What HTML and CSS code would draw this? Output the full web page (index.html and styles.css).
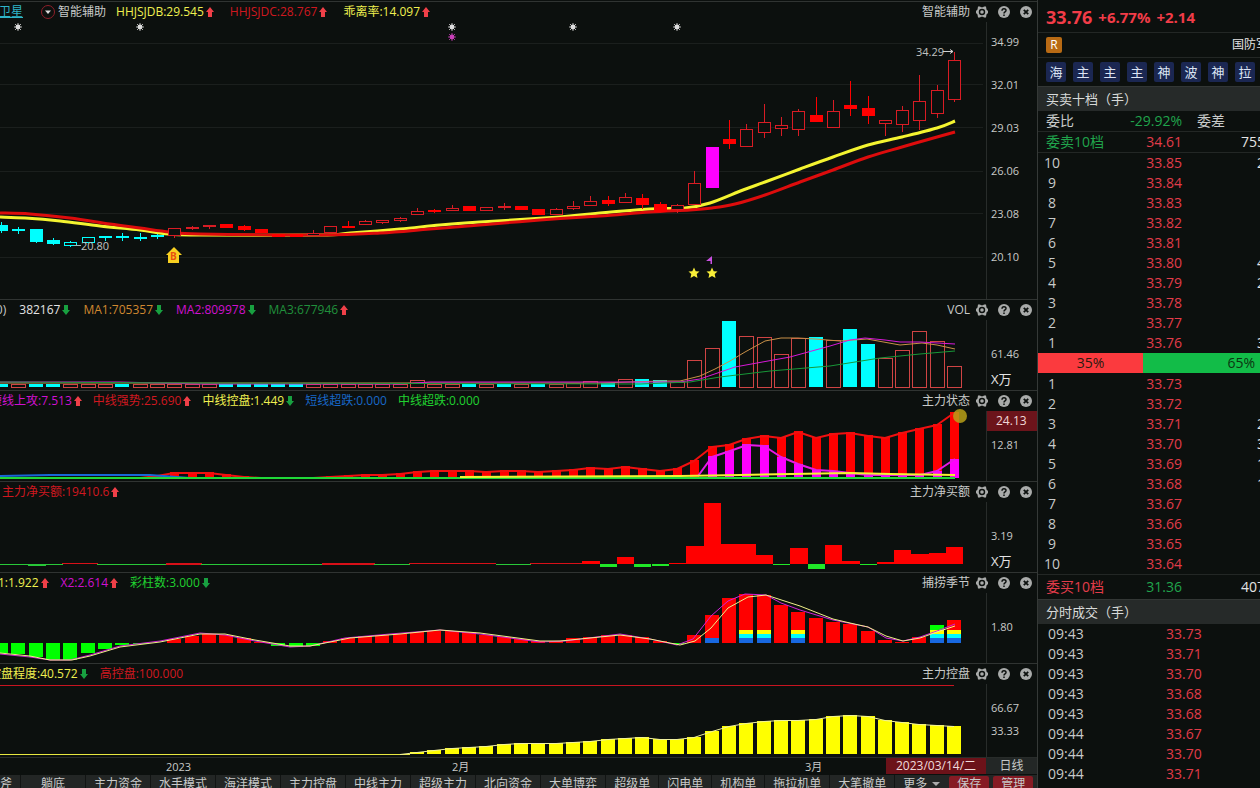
FILE: index.html
```html
<!DOCTYPE html>
<html lang="zh-CN">
<head>
<meta charset="utf-8">
<title>智能辅助</title>
<link rel="stylesheet" href="styles.css">
</head>
<body>
<svg class="defs" aria-hidden="true">
  <symbol id="up" viewBox="0 0 8 10"><path d="M4 0L8 5H6V10H2V5H0Z" fill="#f04048"/></symbol>
  <symbol id="down" viewBox="0 0 8 10"><path d="M4 10L8 5H6V0H2V5H0Z" fill="#18a040"/></symbol>
  <symbol id="gear" viewBox="0 0 12 12"><path fill-rule="evenodd" fill="#a9abaa" d="M2 .5H4L5 1.300H7L8 .5H10L10.500 3.500L12 5V7L10.500 8.500L10 11.500H8L7 10.700H5L4 11.500H2L1.500 8.500L0 7V5L1.500 3.500ZM6 2.800A3.200 3.200 0 1 0 6 9.200A3.200 3.200 0 1 0 6 2.800ZM6 4.200A1.800 1.800 0 1 1 6 7.800A1.800 1.800 0 1 1 6 4.200Z"/></symbol>
  <symbol id="help" viewBox="0 0 12 12"><circle cx="6" cy="6" r="6" fill="#a9abaa"/><path d="M4 4.800C4 2 8 2 8 4.500C8 6 6 5.900 6 7.500M6 8.600V10" fill="none" stroke="#0c100e" stroke-width="1.500"/></symbol>
  <symbol id="close" viewBox="0 0 12 12"><circle cx="6" cy="6" r="6" fill="#a9abaa"/><path d="M3.800 3.800L8.200 8.200M8.200 3.800L3.800 8.200" stroke="#0c100e" stroke-width="1.800"/></symbol>
</svg>
<div class="app">
  <main class="charts">
    <section class="panel panel-main">
      <header class="head">
        <div class="legend">
          <a class="stock" href="#">卫星</a>
          <button class="fold" aria-label="展开"><svg viewBox="0 0 14 14"><circle cx="7" cy="7" r="6.500" fill="none" stroke="#8e1f2a"/><path d="M4 5.500H10L7 9Z" fill="#ddd"/></svg></button>
          <span class="name">智能辅助</span>
          <span class="item yellow">HHJSJDB:29.545<svg><use href="#up"/></svg></span>
          <span class="item red">HHJSJDC:28.767<svg><use href="#up"/></svg></span>
          <span class="item yellow">乖离率:14.097<svg><use href="#up"/></svg></span>
        </div>
        <div class="tools">智能辅助<button aria-label="设置"><svg><use href="#gear"/></svg></button><button aria-label="帮助"><svg><use href="#help"/></svg></button><button aria-label="关闭"><svg><use href="#close"/></svg></button></div>
      </header>
      <div class="body">
        <svg class="plot" id="kline" viewBox="0 22 986 277"></svg>
        <div class="axis axis-price"><span>34.99</span><span>32.01</span><span>29.03</span><span>26.06</span><span>23.08</span><span>20.10</span></div>
      </div>
    </section>
    <section class="panel">
      <header class="head">
        <div class="legend cut-vol">
          <span class="name">10)</span>
          <span class="item white">382167<svg><use href="#down"/></svg></span>
          <span class="item orange">MA1:705357<svg><use href="#down"/></svg></span>
          <span class="item magenta">MA2:809978<svg><use href="#down"/></svg></span>
          <span class="item green">MA3:677946<svg><use href="#up"/></svg></span>
        </div>
        <div class="tools">VOL<button aria-label="设置"><svg><use href="#gear"/></svg></button><button aria-label="帮助"><svg><use href="#help"/></svg></button><button aria-label="关闭"><svg><use href="#close"/></svg></button></div>
      </header>
      <div class="body">
        <svg class="plot" id="vol" viewBox="0 320 986 70"></svg>
        <div class="axis axis-mid"><span>61.46</span><span class="unit">X万</span></div>
      </div>
    </section>
    <section class="panel">
      <header class="head">
        <div class="legend cut-state">
          <span class="item magenta">短线上攻:7.513<svg><use href="#up"/></svg></span>
          <span class="item red">中线强势:25.690<svg><use href="#up"/></svg></span>
          <span class="item yellow">中线控盘:1.449<svg><use href="#down"/></svg></span>
          <span class="item blue">短线超跌:0.000</span>
          <span class="item lime">中线超跌:0.000</span>
        </div>
        <div class="tools">主力状态<button aria-label="设置"><svg><use href="#gear"/></svg></button><button aria-label="帮助"><svg><use href="#help"/></svg></button><button aria-label="关闭"><svg><use href="#close"/></svg></button></div>
      </header>
      <div class="body">
        <svg class="plot" id="state" viewBox="0 411 986 70"></svg>
        <div class="axis axis-state"><span class="mark">24.13</span><span>12.81</span></div>
      </div>
    </section>
    <section class="panel">
      <header class="head">
        <div class="legend cut-net">
          <span class="item red">主力净买额:19410.6<svg><use href="#up"/></svg></span>
        </div>
        <div class="tools">主力净买额<button aria-label="设置"><svg><use href="#gear"/></svg></button><button aria-label="帮助"><svg><use href="#help"/></svg></button><button aria-label="关闭"><svg><use href="#close"/></svg></button></div>
      </header>
      <div class="body">
        <svg class="plot" id="net" viewBox="0 502 986 70"></svg>
        <div class="axis axis-mid"><span>3.19</span><span class="unit">X万</span></div>
      </div>
    </section>
    <section class="panel">
      <header class="head">
        <div class="legend cut-season">
          <span class="item yellow">X1:1.922<svg><use href="#up"/></svg></span>
          <span class="item magenta">X2:2.614<svg><use href="#up"/></svg></span>
          <span class="item lime">彩柱数:3.000<svg><use href="#down"/></svg></span>
        </div>
        <div class="tools">捕捞季节<button aria-label="设置"><svg><use href="#gear"/></svg></button><button aria-label="帮助"><svg><use href="#help"/></svg></button><button aria-label="关闭"><svg><use href="#close"/></svg></button></div>
      </header>
      <div class="body">
        <svg class="plot" id="season" viewBox="0 593 986 70"></svg>
        <div class="axis axis-mid"><span>1.80</span></div>
      </div>
    </section>
    <section class="panel panel-last">
      <header class="head">
        <div class="legend cut-control">
          <span class="item yellow">控盘程度:40.572<svg><use href="#down"/></svg></span>
          <span class="item red">高控盘:100.000</span>
        </div>
        <div class="tools">主力控盘<button aria-label="设置"><svg><use href="#gear"/></svg></button><button aria-label="帮助"><svg><use href="#help"/></svg></button><button aria-label="关闭"><svg><use href="#close"/></svg></button></div>
      </header>
      <div class="body">
        <svg class="plot" id="control" viewBox="0 684 986 73"></svg>
        <div class="axis axis-control"><span>66.67</span><span>33.33</span></div>
      </div>
    </section>
    <div class="timeline">
      <svg class="months" viewBox="0 0 886 18"><text x="166" y="13">2023</text><text x="452" y="13">2月</text><text x="805" y="13">3月</text></svg>
      <span class="date">2023/03/14/二</span>
      <button class="period">日线</button>
    </div>
    <nav class="tabs">
      <button class="first">斧</button><button class="wide">躺底</button><button>主力资金</button><button>水手模式</button><button>海洋模式</button><button>主力控盘</button><button>中线主力</button><button>超级主力</button><button>北向资金</button><button>大单博弈</button><button>超级单</button><button>闪电单</button><button>机构单</button><button>拖拉机单</button><button>大笔撤单</button><button class="more">更多<svg viewBox="0 0 8 4"><path d="M0 0H8L4 4Z" fill="#aaa"/></svg></button><button class="act">保存</button><button class="act">管理</button>
    </nav>
  </main>
  <aside class="side">
    <div class="quote"><strong>33.76</strong><b>+6.77%</b><b>+2.14</b></div>
    <div class="sector"><span class="badge">R</span><span>国防军工</span></div>
    <div class="tags"><button>海</button><button>主</button><button>主</button><button>主</button><button>神</button><button>波</button><button>神</button><button>拉</button></div>
    <h2>买卖十档（手）</h2>
    <div class="line"><span>委比</span><span class="val dn">-29.92%</span><span class="diff">委差</span></div>
    <div class="line"><span class="dn">委卖10档</span><span class="val rise">34.61</span><span class="sum">755</span></div>
    <table class="book" id="asks"></table>
    <div class="ratio"><span class="buy">35%</span><span class="sell">65%</span></div>
    <table class="book" id="bids"></table>
    <div class="line line-buy"><span class="rise">委买10档</span><span class="val dn">31.36</span><span class="sum">407</span></div>
    <h2>分时成交（手）</h2>
    <table class="deals" id="deals"></table>
  </aside>
</div>
<script src="charts.js"></script>
</body>
</html>
```
FILE: styles.css
```css
* { box-sizing: border-box; }
body {
  margin: 0;
  background: #0c100e;
  color: #c8cac9;
  font: 12px/20px "Open Sans", "Noto Sans CJK SC", sans-serif;
}
button { margin: 0; padding: 0; border: 0; background: none; color: inherit; font: inherit; }
.defs { position: absolute; width: 0; height: 0; }
.app { display: flex; height: 100vh; overflow: hidden; }
.charts { flex: 1; min-width: 0; display: flex; flex-direction: column; padding-top: 1px; overflow: hidden; }

.panel { flex: 90 1 0; display: flex; flex-direction: column; border-top: 1px solid #303432; min-height: 0; }
.panel-main { flex-grow: 297; }
.panel-last { flex-grow: 93; }
.head { flex: none; display: flex; justify-content: space-between; height: 20px; overflow: hidden; white-space: nowrap; }
.legend { display: flex; align-items: center; gap: 12px; }
.item { display: flex; align-items: center; gap: 2px; }
.item svg { width: 8px; height: 10px; }
.stock { color: #2fb4c8; }
.panel-main .legend { margin-left: -1px; gap: 16px; }
.panel-main .name { margin-right: -6px; }
.fold { display: flex; margin: 0 -13px 0 2px; }
.fold svg { width: 14px; height: 14px; }
.cut-vol { margin-left: -11px; gap: 13px; }
.cut-state { margin-left: -10px; gap: 11px; }
.cut-net { margin-left: 2px; }
.cut-season { margin-left: -9px; }
.cut-control { margin-left: -11px; }
.tools { display: flex; align-items: center; gap: 10px; padding-right: 5px; }
.tools button { display: flex; }
.tools button:first-of-type { margin-left: -4px; }
.tools svg { width: 12px; height: 12px; }

.white { color: #e4e4e4; }
.yellow { color: #f0f050; }
.red { color: #d01820; }
.orange { color: #d08830; }
.magenta { color: #d010d0; }
.green { color: #20903c; }
.blue { color: #1868c8; }
.lime { color: #20d030; }

.body { flex: 1; display: flex; min-height: 0; }
.plot { flex: 1; min-width: 0; height: 100%; display: block; }
.plot text { font-size: 11px; fill: #c0c2c1; }
.plot .mark-b { font-size: 10px; font-weight: bold; fill: #e85010; }
.axis { flex: 0 0 51px; display: flex; flex-direction: column; border-left: 1px solid #282c2a; font-size: 11px; }
.axis span { flex: none; padding-left: 4px; }
.axis-price { padding-top: 10px; gap: 23px; }
.axis-mid { padding-top: 24px; gap: 5px; }
.axis-state { gap: 4px; }
.axis-control { padding-top: 14px; gap: 3px; }
.axis .unit { font-size: 13px; color: #e4e4e4; }
.axis .mark { padding-left: 9px; background: #6c141b; color: #f0d8d8; font-size: 12px; }

.timeline { flex: none; display: flex; height: 18px; line-height: 16px; border-top: 1px solid #282c2a; }
.months { flex: 1; min-width: 0; height: 18px; }
.months text { font-size: 11px; fill: #c8cac9; }
.date { flex: 0 0 100px; height: 16px; background: #6c1219; color: #f0dcdc; text-align: center; }
.period { flex: 0 0 51px; height: 16px; background: #232726; }

.tabs { flex: 0 0 13px; display: flex; align-items: flex-start; overflow: hidden; background: #232625; line-height: 17px; white-space: nowrap; }
.tabs button { flex: none; padding: 0 8px; border-right: 1px solid #121413; }
.tabs .first { width: 21px; padding: 0; text-align: left; }
.tabs .wide { width: 65px; }
.tabs .more { display: flex; align-items: center; gap: 5px; padding-right: 7px; border: 0; }
.more svg { width: 8px; height: 4px; }
.tabs .act { width: 40px; margin: 1px 2px 0; padding: 0; border: 0; border-radius: 2px; background: #861b24; line-height: 15px; }

.side { flex: 0 0 223px; display: flex; flex-direction: column; border-left: 1px solid #353937; overflow: hidden; white-space: nowrap; font-size: 14px; }
.side > * { flex: none; }
.quote { display: flex; align-items: center; gap: 6px; height: 33px; padding: 2px 0 0 8px; border-bottom: 1px solid #232725; color: #f23c48; font-size: 15px; }
.quote strong { font-size: 18px; }
.sector { display: flex; align-items: center; justify-content: space-between; width: 244px; height: 25px; padding: 0 0 0 8px; border-bottom: 1px solid #232725; color: #e4e4e4; font-size: 12px; }
.sector span:last-child { width: 50px; }
.badge { width: 16px; border-radius: 2px; background: #b86a14; color: #fff; text-align: center; line-height: 16px; }
.tags { display: flex; align-items: center; gap: 7px; height: 28px; padding-left: 8px; }
.tags button { flex: none; width: 20px; height: 20px; border-radius: 2px; background: #1b2752; color: #dce4f4; font-size: 13px; line-height: 20px; }
.side h2 { margin: 0; height: 25px; padding-left: 8px; border-top: 1px solid #333735; background: #262a29; color: #d8dad9; font-size: 13px; font-weight: normal; line-height: 24px; }
.line { display: grid; grid-template-columns: 80px 56px 1fr; align-items: center; height: 21px; padding-left: 8px; border-bottom: 1px solid #232725; }
.val { text-align: right; }
.sum { padding-left: 59px; color: #e4e4e4; }
.diff { padding-left: 15px; }
.dn { color: #20a44c; }
.rise { color: #e23c4a; }
.line-buy { height: 25px; border: 0; border-top: 1px solid #232725; }
table { border-collapse: collapse; table-layout: fixed; }
td { height: 20px; padding: 0; line-height: 20px; }
.book { width: 300px; }
.book td:nth-child(1) { width: 28px; text-align: center; }
.book td:nth-child(2) { width: 116px; text-align: right; }
.book td:nth-child(3) { padding-left: 75px; color: #e4e4e4; }
#bids { margin-top: 1px; }
.ratio { display: flex; color: #2a1a10; }
.buy { flex: 1; background: #fb3a3e; text-align: center; }
.sell { flex: 0 0 117px; background: #12bc48; text-align: right; padding-right: 5px; color: #0c3410; }
.deals { width: 223px; }
.deals td:first-child { width: 128px; padding-left: 10px; }
```
FILE: charts.js
```js
const NS = 'http://www.w3.org/2000/svg';
const STEP = 17.33;
const RED = '#ff0000', CYAN = '#00ffff', MAG = '#ff00ff', YEL = '#ffff00', GRN = '#00ff00';
const X = i => Math.round(174.3 + STEP * (i - 10));
const $ = id => document.getElementById(id);
function add(svg, tag, attrs, text) {
  const e = document.createElementNS(NS, tag);
  for (const k in attrs) e.setAttribute(k, attrs[k]);
  if (text) e.textContent = text;
  svg.appendChild(e);
  return e;
}
const rect = (s, x, y, w, h, fill) => add(s, 'rect', { x, y, width: w, height: h, fill });
const box = (s, x, y, w, h, stroke) => add(s, 'rect', { x: x + .5, y: y + .5, width: w - 1, height: Math.max(h - 1, 1), fill: '#0c100e', stroke });
const line = (s, pts, stroke, w = 1) => add(s, 'polyline', { points: pts, fill: 'none', stroke, 'stroke-width': w, 'stroke-linejoin': 'round' });
function curve(s, p, stroke, w) {
  let d = `M${p[0][0]} ${p[0][1]}`;
  for (let i = 0; i < p.length - 1; i++) {
    const a = p[i - 1] || p[i], b = p[i], c = p[i + 1], e = p[i + 2] || c;
    d += `C${b[0] + (c[0] - a[0]) / 6} ${b[1] + (c[1] - a[1]) / 6} ${c[0] - (e[0] - b[0]) / 6} ${c[1] - (e[1] - b[1]) / 6} ${c[0]} ${c[1]}`;
  }
  add(s, 'path', { d, fill: 'none', stroke, 'stroke-width': w });
}

/* K line: kind, body top, body bottom, wick top, wick bottom */
const candles = [
  ['c',225,231,222,233],['c',229,231,227,234],['c',229,242,229,243],['c',240,244,238,245],['C',242,246,241,247],
  ['C',237,243,237,243],['c',236,238,236,241],['c',236,238,233,241],['c',237,239,233,241],['c',235,237,234,239],
  ['h',228,236,228,238],['h',227,229,226,230],['h',225,227,225,229],['r',224,228,224,228],['r',226,230,225,231],
  ['r',229,233,229,233],['r',234,237,234,237],['r',234,237,234,237],['h',233,236,230,236],['h',226,233,226,233],
  ['r',226,228,221,228],['h',221,225,220,225],['h',220,223,220,224],['h',218,221,217,222],['h',211,215,208,215],
  ['r',210,212,209,213],['h',208,211,205,211],['r',206,211,206,211],['h',207,211,207,211],['h',206,208,203,210],
  ['r',206,210,206,210],['r',209,215,209,215],['h',209,215,208,215],['h',206,209,201,210],['h',201,206,196,206],
  ['r',200,204,196,206],['h',197,203,193,203],['r',198,205,194,209],['r',204,212,202,212],['h',205,210,204,213],
  ['h',183,205,171,205],['m',147,188,147,188],['r',139,144,120,149],['h',129,147,124,147],['h',122,133,104,138],
  ['h',125,129,117,136],['h',111,130,109,136],['r',115,122,97,122],['h',111,128,100,128],['r',105,109,81,116],
  ['r',108,116,96,124],['h',120,124,120,136],['h',110,125,106,132],['h',101,121,75,130],['h',90,114,85,118],['h',60,100,52,102]];
const k = $('kline');
for (const y of [43, 84, 127, 171, 213, 257]) rect(k, 0, y, 983, 1, '#1b1f1d');
curve(k, [[0,217],[25,218],[60,221],[100,226],[140,230],[168,234],[200,235],[320,235],[350,233],[400,229],[440,225],[480,222],[560,217],[600,213],[650,209],[685,208],[710,203],[743,190],[765,182],[800,169],[833,157],[868,145],[902,137],[937,128],[955,121]], '#f4f430', 3);
curve(k, [[0,213],[30,214],[70,218],[110,224],[140,228],[170,232],[200,234],[320,235],[380,233],[430,229],[480,225],[540,220],[600,216],[650,212],[690,210],[712,208],[735,204],[765,195],[800,182],[833,170],[868,157],[902,147],[937,137],[955,132]], '#dd0c0c', 3);
candles.forEach(([t, a, b, lo, hi], i) => {
  const x = X(i), c = t === 'm' ? MAG : t.toLowerCase() === 'c' ? CYAN : t === 'h' ? '#d81c24' : RED;
  rect(k, x, lo, 1, hi - lo, c);
  if (t === 'h' || t === 'C') box(k, x - 6, a, 13, b - a, c);
  else rect(k, x - 6, a, 13, b - a, c);
});
const spark = (x, y, c) => {
  add(k, 'circle', { cx: x, cy: y, r: 2.4, fill: c });
  add(k, 'path', { d: `M${x-4} ${y}H${x+4}M${x} ${y-4}V${y+4}M${x-3} ${y-3}L${x+3} ${y+3}M${x+3} ${y-3}L${x-3} ${y+3}`, stroke: c, 'stroke-width': .8 });
};
for (const x of [18, 140, 452, 573, 677]) spark(x, 27, '#dddddd');
spark(452, 37, '#c840b8');
add(k, 'text', { x: 916, y: 56 }, '34.29');
add(k, 'path', { d: 'M943 51.500H953M950 49.500L953 51.500L950 53.500', stroke: '#d0d0d0', fill: 'none' });
add(k, 'text', { x: 81, y: 250 }, '20.80');
rect(k, 74, 245, 7, 1, '#a0b8b8');
add(k, 'path', { d: 'M174 247L182 255H179V263H168V255H166Z', fill: '#f8d020' });
add(k, 'text', { x: 170, y: 260, class: 'mark-b' }, 'B');
for (const x of [694, 712]) add(k, 'path', { transform: `translate(${x} 273)`, d: 'M0 -5.500L1.700 -1.800L5.500 -1.500L2.700 1L3.500 5L0 3L-3.500 5L-2.700 1L-5.500 -1.500L-1.700 -1.800Z', fill: '#f8ee38' });
add(k, 'path', { d: 'M706 261L712 256V264L710.500 264V261Z', fill: '#c850e0' });

/* Volume */
const v = $('vol');
const cyanVol = [0,2,3,7,13,14,15,16,17,27,29,31,35,37,38,42,47,49,50];
const volTop = { 24:380, 33:383, 34:381, 35:383, 36:379, 37:379, 38:380, 39:382, 40:360, 41:348, 42:321, 43:336, 44:337, 45:354, 46:338, 47:337, 48:340, 49:329, 50:344, 51:358, 52:350, 53:331, 54:341, 55:366 };
for (let i = 0; i < 56; i++) {
  const t = volTop[i] || 384;
  if (cyanVol.includes(i)) rect(v, X(i) - 7, t, 14, 387 - t, CYAN);
  else box(v, X(i) - 7, t, 15, 388 - t, '#d04444');
}
line(v, '0,383 600,383 660,381 680,381 700,376 715,369 730,361 745,352 765,341 781,338 798,338 815,339 840,341 867,339 900,345 922,343 937,345 955,349', '#c89048');
line(v, '0,382 120,382 200,384 400,384 430,382 640,382 680,382 700,379 735,367 790,357 830,346 850,340 865,338 885,340 900,342 920,342 955,344', '#d818d8');
line(v, '0,382 200,383 640,384 690,382 720,377 770,371 830,366 880,358 920,354 955,351', '#189838');

/* Main-force state */
const s = $('state');
const st = [477,477,477,477,477,477,477,477,477,475,472,472,472,474,476,477,477,477,477,476,475,474,474,473,471,470,470,470,471,470,470,471,470,469,467,468,466,468,470,468,460,446,444,438,435,437,431,437,433,432,435,437,432,428,424,412];
st.forEach((y, i) => rect(s, X(i) - 4, y, 9, 478 - y, RED));
line(s, st.map((y, i) => `${X(i)},${y + 1}`).join(' '), '#f01010', 2);
const mg = { 41:456, 42:451, 43:444, 44:445, 45:457, 46:464, 47:470, 48:471, 49:473, 50:475, 51:475, 52:475, 53:475, 54:471, 55:459 };
for (const i in mg) rect(s, X(+i) - 4, mg[i], 9, 478 - mg[i], MAG);
line(s, '698,476 712,457 730,451 747,445 764,446 781,457 798,464 816,470 833,471 850,473 868,475 920,475 937,471 955,459', '#e818e8', 2);
line(s, '0,476 50,475 150,475 190,478', '#1868d8', 2);
line(s, '0,478 955,478', '#20d838', 2);
line(s, '460,477 680,476 740,475 850,473 890,474 955,475', '#f4f430', 2);
add(s, 'circle', { cx: 960, cy: 416, r: 7, fill: '#b8a018', 'fill-opacity': .85 });
s.style.overflow = 'visible';

/* Net buying */
const n = $('net');
const thin = [1,1,-1,1,0,0,1,1,0,0,-1,-1,1,1,1,1,1,1,0,-1,-1,-1,1,1,0,0,0,0,0,0,0,0,0,0];
for (let i = 0; i < 34; i++) {
  const red = [4,5,10,11,19,20,21,24,25,26,27,28,31,32,33].includes(i);
  rect(n, X(i) - 8, red ? 563 : 564, 18, thin[i] === -1 ? 2 : 1, red ? '#d81018' : '#28c838');
}
const nt = { 34:561, 36:557, 39:563, 40:546, 41:503, 42:544, 43:544, 44:555, 46:548, 48:545, 49:561, 51:562, 52:550, 53:554, 54:553, 55:547 };
for (const i in nt) rect(n, X(+i) - 8, nt[i], X(+i + 1) - X(+i), 564 - nt[i], RED);
const ng = { 35:3, 37:3, 38:2, 45:1, 47:5, 50:1 };
for (const i in ng) rect(n, X(+i) - 8, 564, 17, ng[i], '#20e828');

/* Season */
const q = $('season');
const ss = [653,654,657,660,660,653,649,645,644,643,639,636,634,635,638,642,646,647,646,641,638,636,635,634,632,631,631,632,635,637,639,641,641,638,637,635,635,637,641,644,635,615,598,594,595,605,612,618,622,624,625,631,640,642,637,625,620];
ss.splice(50, 1);
ss[51] = 640; ss[52] = 642; ss[53] = 637; ss[54] = 625; ss[55] = 620;
ss.forEach((y, i) => {
  if (y > 643) rect(q, X(i) - 7, 643, 14, y - 643, GRN);
  else rect(q, X(i) - 7, y, 14, 643 - y, i === 54 ? GRN : RED);
  if ([43,44,46,54,55].includes(i)) { rect(q, X(i) - 7, 630, 14, 4, YEL); rect(q, X(i) - 7, 634, 14, 4, CYAN); }
  if ([41,43,44,46,54,55].includes(i)) rect(q, X(i) - 7, 638, 14, 5, '#1868e0');
});
line(q, '0,654 30,657 50,660 70,660 90,655 120,646 160,641 200,633 225,635 255,641 290,647 310,646 345,638 390,634 440,630 480,634 540,642 565,641 620,634 650,639 677,645 693,639 711,616 728,601 745,594 766,595 781,603 800,610 833,620 868,627 886,638 903,641 920,637 937,631 955,624', '#d020d8');
line(q, '0,653 30,656 50,660 72,660 90,656 120,647 160,642 200,634 225,634 255,640 290,646 310,646 350,638 400,634 440,630 480,633 540,641 560,641 620,635 650,639 680,645 695,641 711,628 728,608 748,597 766,595 800,606 833,619 850,623 868,627 886,636 903,641 920,638 937,632 955,626', '#f0f088');

/* Control */
const c = $('control');
const ct = [752,750,748,747,746,744,743,743,743,742,741,739,738,737,739,739,737,731,726,723,721,720,720,719,716,715,716,720,722,724,725,726];
rect(c, 0, 685, 954, 1, '#c81420');
rect(c, 0, 754, 410, 1, '#e8e840');
ct.forEach((y, i) => rect(c, X(i + 24) - 7, y, 14, 754 - y, YEL));
line(c, '400,754.5 ' + ct.map((y, i) => `${X(i + 24)},${y}.5`).join(' '), '#f0f0a0');

/* Order book and deals */
const row = (...cells) => '<tr>' + cells.join('') + '</tr>';
const td = (t, cl = '') => `<td class="${cl}">${t}</td>`;
const askVol = { 10: '2', 5: '4', 4: '2', 1: '3' }, bidVol = { 3: '2', 4: '3', 5: '1', 6: '1' };
let h = '';
for (let i = 10; i > 0; i--) h += row(td(i), td((33.75 + i / 100).toFixed(2), 'rise'), td(askVol[i] || ''));
$('asks').innerHTML = h;
h = '';
for (let i = 1; i <= 10; i++) h += row(td(i), td((33.74 - i / 100).toFixed(2), 'rise'), td(bidVol[i] || ''));
$('bids').innerHTML = h;
$('deals').innerHTML = [['09:43','33.73'],['09:43','33.71'],['09:43','33.70'],['09:43','33.68'],['09:43','33.68'],['09:44','33.67'],['09:44','33.70'],['09:44','33.71']]
  .map(([t, p]) => row(td(t), td(p, 'rise'))).join('');
```
